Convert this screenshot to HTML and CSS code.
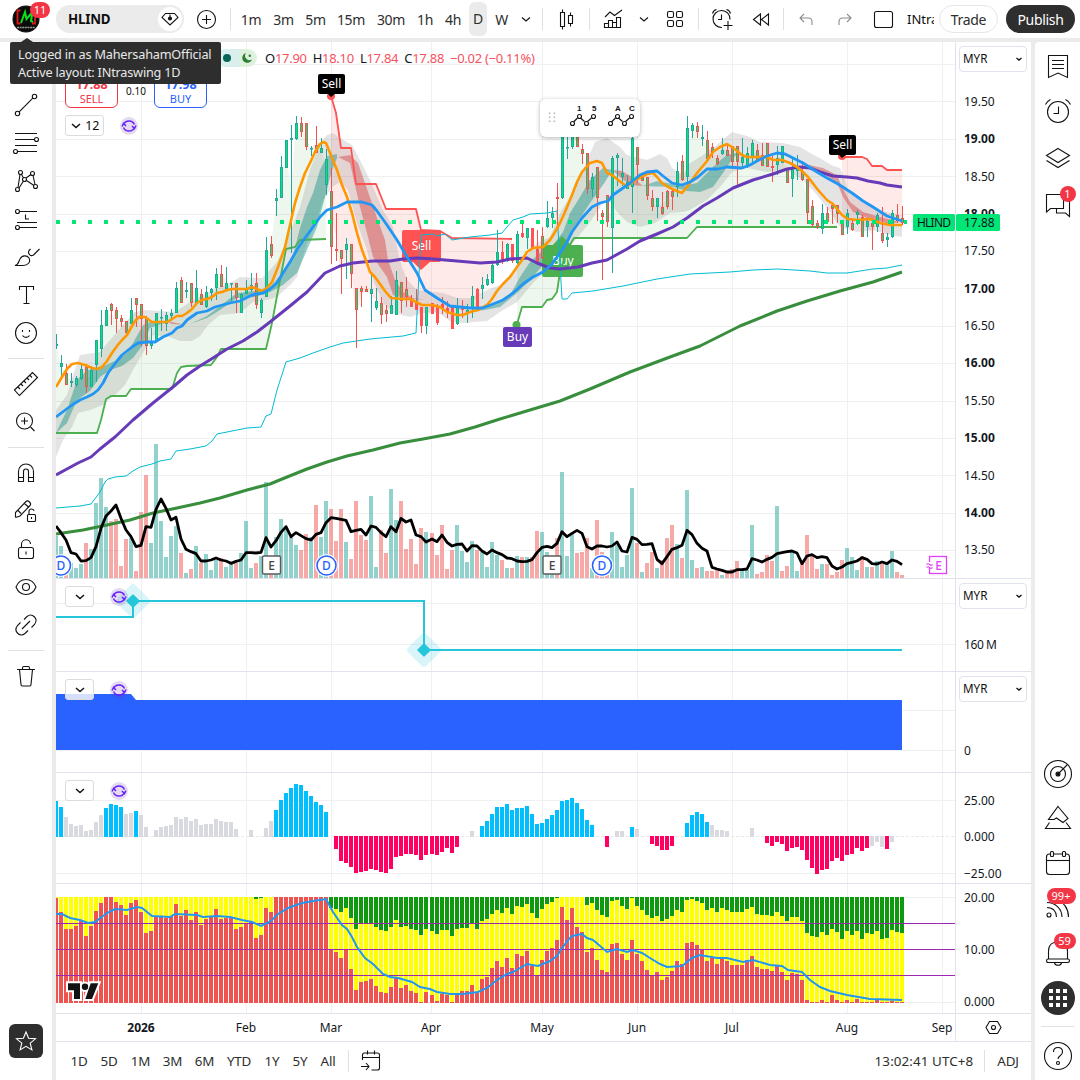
FILE: index.html
```html
<!DOCTYPE html>
<html lang="en">
<head>
    <meta charset="UTF-8">
    <meta name="viewport" content="width=device-width, initial-scale=1.0">
    <title>HLIND 17.88 - INtraswing 1D</title>
    <link rel="stylesheet" href="styles.css">
</head>
<body>
    <header class="topbar">
        <div class="avatar-cell">
            <svg class="avatar" viewBox="0 0 28 28"><circle cx="14" cy="14" r="13" fill="#0b0b0b"/><path d="M8.500 5.500H5.500v13h3M20 5.500h3v13h-3" fill="none" stroke="#e01717" stroke-width="1.800"/><path d="M9 18l4-11 1.500 7 6-7-1.500 9 2 1" fill="none" stroke="#0be01c" stroke-width="2"/><path d="M5 22.500h18" stroke="#999" stroke-width="1.500" stroke-dasharray="2 .6"/></svg>
            <span class="badge badge-avatar">11</span>
        </div>
        <div class="symbol">
            <b>HLIND</b>
            <span class="gem"><svg viewBox="0 0 24 24"><path d="M7.500 6.500h9l3.500 4-8 7.500-8-7.500z"/><path d="M12 7.500v4" /><circle cx="12" cy="11.500" r="1.500" fill="#131313"/></svg></span>
        </div>
        <div class="tb w44"><svg viewBox="0 0 28 28"><circle cx="14.500" cy="14.500" r="9"/><path d="M14.500 10v9M10 14.500h9"/></svg></div>
        <i class="sep sep-a"></i>
        <div class="tb w32 iv">1m</div>
        <div class="tb w33 iv">3m</div>
        <div class="tb w31 iv">5m</div>
        <div class="tb w40 iv">15m</div>
        <div class="tb w40 iv">30m</div>
        <div class="tb w28 iv">1h</div>
        <div class="tb w28 iv">4h</div>
        <div class="tb w22 iv"><span class="on">D</span></div>
        <div class="tb w25 iv">W</div>
        <div class="tb w24"><svg viewBox="0 0 28 28"><path d="M10 12.500l4 3.500 4-3.500"/></svg></div>
        <i class="sep sep-b"></i>
        <div class="tb w46"><svg viewBox="0 0 28 28"><path d="M8.500 7.500h4v14h-4zM10.500 7.500V4.500M10.500 21.500v3M16.500 10.500h4v8h-4zM18.500 10.500v-3M18.500 18.500v3"/></svg></div>
        <i class="sep"></i>
        <div class="tb w46"><svg viewBox="0 0 28 28"><path d="M5.500 22.500v-4h4v4zM9.500 22.500v-7h4v7M13.500 18.500v-1h4v5M17.500 17.500v-5h4v10h-16M6 12l5-5 4.500 3.500L23 5"/></svg></div>
        <div class="tb w16"><svg viewBox="0 0 28 28"><path d="M10 12.500l4 3.500 4-3.500"/></svg></div>
        <div class="tb w46"><svg viewBox="0 0 28 28"><rect x="6.500" y="6.500" width="6" height="6" rx="1.500"/><rect x="15.500" y="6.500" width="6" height="6" rx="1.500"/><rect x="6.500" y="15.500" width="6" height="6" rx="1.500"/><rect x="15.500" y="15.500" width="6" height="6" rx="1.500"/></svg></div>
        <i class="sep"></i>
        <div class="tb w46"><svg viewBox="0 0 28 28"><path d="M14 22.500a8.500 8.500 0 1 1 8-8M13.500 9.500v5h-3.500M4.500 8.500c.5-2 2-3.500 4-4M22.500 8.500c-.5-2-2-3.500-4-4M20 16v9M15.500 20.500h9"/></svg></div>
        <div class="tb w32"><svg viewBox="0 0 28 28"><path d="M13.500 9v11L6.500 14.500zM21.500 9v11l-7-5.500z"/></svg></div>
        <i class="sep sep-c"></i>
        <div class="tb w44 faded"><svg viewBox="0 0 28 28"><path d="M12 9l-4 4 4 4M8 13h8.500c2.500 0 3.500 1.500 3.500 4v3"/></svg></div>
        <div class="tb w34 faded"><svg viewBox="0 0 28 28"><path d="M16 9l4 4-4 4M20 13h-8.500c-2.500 0-3.500 1.500-3.500 4v3"/></svg></div>
        <div class="tb w42"><svg viewBox="0 0 28 28"><rect x="5.500" y="6.500" width="18" height="16" rx="2"/></svg></div>
        <div class="layout-name">INtraswing 1D</div>
        <button class="trade">Trade</button>
        <button class="publish">Publish</button>
    </header>

    <div class="workspace">
        <nav class="tools">
            <div class="tool"></div>
            <div class="tool"><svg viewBox="0 0 28 28"><circle cx="5.500" cy="22.500" r="2.200"/><circle cx="22.500" cy="5.500" r="2.200"/><path d="M7.200 20.800L20.800 7.200"/></svg></div>
            <div class="tool"><svg viewBox="0 0 28 28"><path d="M3 4.500h22M3 10.500h19M3 16.500h22M6 22.500h19"/><circle cx="24.500" cy="10.500" r="2"/><circle cx="3.500" cy="22.500" r="2"/></svg></div>
            <div class="tool"><svg viewBox="0 0 28 28"><circle cx="8.500" cy="5.500" r="2"/><circle cx="20.500" cy="6.500" r="2"/><circle cx="12.500" cy="12.500" r="2"/><circle cx="5.500" cy="22.500" r="2"/><circle cx="23.500" cy="19.500" r="2"/><path d="M8 7.500L6 20.500M9.500 7.500l2 3.500M14 11l5-3.500M21 8.500l2 9M7 21l4.500-7M14.500 13.500l7.500 5"/></svg></div>
            <div class="tool"><svg viewBox="0 0 28 28"><circle cx="5.500" cy="6.500" r="2"/><circle cx="5.500" cy="22.500" r="2"/><path d="M7.500 6.500H25M5 17.500h20M7.500 22.500H25M13.500 9.500v4.500h3.500"/></svg></div>
            <div class="tool"><svg viewBox="0 0 28 28"><path d="M3 22.500c4-1 3.500-4 5-6.500 2-4 7-4 9-1 2 4-1 7.500-6 7.500zM17 7.500c-1.500 3 1.500 6.500 4.500 4.500l6-6M17 7.500l1.500-1.500"/></svg></div>
            <div class="tool"><svg viewBox="0 0 28 28"><path d="M7.500 9V5.500h14V9M14.500 5.500v17M11.500 22.500h6"/></svg></div>
            <div class="tool"><svg viewBox="0 0 28 28"><circle cx="14" cy="14" r="10.500"/><path d="M10.500 16.500c1.500 2.500 5.500 2.500 7 0M10.500 11v2M17.500 11v2"/></svg></div>
            <hr>
            <div class="tool"><svg viewBox="0 0 28 28"><path d="M2.500 20L20.500 2.500l5 5L7.500 25.500zM6 17l2 2M9 14l2 2M12 11l2 2M15 8l2 2M18 5.500l2 2"/></svg></div>
            <div class="tool"><svg viewBox="0 0 28 28"><circle cx="12.500" cy="13" r="8"/><path d="M18.500 19l4 4M12.500 9.500v7M9 13h7"/></svg></div>
            <hr>
            <div class="tool"><svg viewBox="0 0 28 28"><path d="M6.500 22.500v-10a7.500 7.500 0 0 1 15 0v10h-5v-10a2.500 2.500 0 0 0-5 0v10zM6.500 18.500h5M16.500 18.500h5"/></svg></div>
            <div class="tool"><svg viewBox="0 0 28 28"><path d="M3.500 20.500v-5L14 4.500c1-1 2.500-.5 3.500.5s1.500 2.500.5 3.500L8 19l-4.500 1.500M12.500 6.500l4.500 4M6 13.500l3 3"/><rect x="15.500" y="17.500" width="8" height="7" rx="1"/><path d="M17 17.500V15a2.500 2.500 0 0 1 5-1M19.500 20v2"/></svg></div>
            <div class="tool"><svg viewBox="0 0 28 28"><rect x="6.500" y="12.500" width="15" height="11" rx="2"/><path d="M9.500 12.500V9.500a4.500 4.500 0 0 1 9-.5M14 16.500v3"/></svg></div>
            <div class="tool"><svg viewBox="0 0 28 28"><path d="M4 14c4-10 16-10 20 0-4 10-16 10-20 0z"/><circle cx="14" cy="14" r="3.500"/></svg></div>
            <div class="tool"><svg viewBox="0 0 28 28"><path d="M12 8.500l3-3c5-4 12 2 7.500 8l-3 3M16 19.500l-3 3c-5 4-12-2-7.500-8l3-3M10 18l8-8"/></svg></div>
            <hr>
            <div class="tool"><svg viewBox="0 0 28 28"><path d="M5 7.500h18M7.500 7.500l1.500 15c0 1 .5 1.500 1.500 1.500h7c1 0 1.500-.5 1.500-1.500l1.500-15M10.500 7.500V6c0-1 .5-1.500 1.500-1.500h4c1 0 1.500.5 1.500 1.500v1.500"/></svg></div>
            <div class="star"><svg viewBox="0 0 28 28"><path d="M14 5l2.600 6.300 6.900.5-5.300 4.400 1.700 6.700L14 19.300l-5.900 3.600 1.700-6.700-5.300-4.400 6.900-.5z"/></svg></div>
        </nav>

        <main class="chart">
            <section class="pane pane-main">
                <svg id="main" viewBox="56 42 975 536"></svg>
                <div class="legend">
                    <span class="session"><i></i><svg viewBox="0 0 12 12"><path d="M5 1a5 5 0 1 0 6 6.500A4.500 4.500 0 0 1 5 1z" fill="#2e7d32"/><circle cx="8.800" cy="3.800" r="1.200" fill="#2e7d32"/></svg></span>
                    <span>O<em>17.90</em></span><span>H<em>18.10</em></span><span>L<em>17.84</em></span><span>C<em>17.88</em></span><em>−0.02 (−0.11%)</em>
                </div>
                <div class="orders">
                    <div class="order sell"><b>17.88</b>SELL</div>
                    <span class="spread">0.10</span>
                    <div class="order buy"><b>17.98</b>BUY</div>
                </div>
                <div class="objects"><svg viewBox="0 0 12 12"><path d="M2 4l4 3.500L10 4"/></svg>12</div>
                <span class="sync sync-main"><svg viewBox="0 0 18 18"><path d="M3.500 7.500a6 6 0 0 1 11 0M14.500 10.500a6 6 0 0 1-11 0M2 9.500l1.500-3 2.500 2.500M16 8.500l-1.500 3L12 9"/></svg></span>
                <div class="currency">MYR<svg viewBox="0 0 10 10"><path d="M2.500 4L5 6l2.500-2"/></svg></div>
                <div class="drawbar">
                    <svg class="grip" viewBox="0 0 10 16"><path d="M1 1.500h2M7 1.500h2M1 6.500h2M7 6.500h2M1 11.500h2M7 11.500h2"/></svg>
                    <svg viewBox="0 0 28 28"><path d="M5.500 20l4-4M12.500 16l4 3.500M19.500 19.500l4-3.500"/><circle cx="4.500" cy="21.500" r="2"/><circle cx="11.500" cy="14.500" r="2"/><circle cx="18.500" cy="21.500" r="2"/><circle cx="25.500" cy="14.500" r="2"/><text x="9" y="9">1</text><text x="24" y="9">5</text></svg>
                    <svg viewBox="0 0 28 28"><path d="M5.500 20l4-4M12.500 16l4 3.500M19.500 19.500l4-3.500"/><circle cx="4.500" cy="21.500" r="2"/><circle cx="11.500" cy="14.500" r="2"/><circle cx="18.500" cy="21.500" r="2"/><circle cx="25.500" cy="14.500" r="2"/><text x="9" y="9">A</text><text x="23" y="9">C</text></svg>
                </div>
            </section>
            <section class="pane pane-shares">
                <svg id="shares" viewBox="56 579 975 92"></svg>
                <div class="objects collapsed"><svg viewBox="0 0 12 12"><path d="M2 4l4 3.500L10 4"/></svg></div>
                <span class="sync"><svg viewBox="0 0 18 18"><path d="M3.500 7.500a6 6 0 0 1 11 0M14.500 10.500a6 6 0 0 1-11 0M2 9.500l1.500-3 2.500 2.500M16 8.500l-1.500 3L12 9"/></svg></span>
                <div class="currency">MYR<svg viewBox="0 0 10 10"><path d="M2.500 4L5 6l2.500-2"/></svg></div>
            </section>
            <section class="pane pane-area">
                <svg id="area" viewBox="56 672 975 100"></svg>
                <div class="objects collapsed"><svg viewBox="0 0 12 12"><path d="M2 4l4 3.500L10 4"/></svg></div>
                <span class="sync"><svg viewBox="0 0 18 18"><path d="M3.500 7.500a6 6 0 0 1 11 0M14.500 10.500a6 6 0 0 1-11 0M2 9.500l1.500-3 2.500 2.500M16 8.500l-1.500 3L12 9"/></svg></span>
                <div class="currency">MYR<svg viewBox="0 0 10 10"><path d="M2.500 4L5 6l2.500-2"/></svg></div>
            </section>
            <section class="pane pane-hist">
                <svg id="hist" viewBox="56 773 975 110"></svg>
                <div class="objects collapsed"><svg viewBox="0 0 12 12"><path d="M2 4l4 3.500L10 4"/></svg></div>
                <span class="sync"><svg viewBox="0 0 18 18"><path d="M3.500 7.500a6 6 0 0 1 11 0M14.500 10.500a6 6 0 0 1-11 0M2 9.500l1.500-3 2.500 2.500M16 8.500l-1.500 3L12 9"/></svg></span>
            </section>
            <section class="pane pane-banker">
                <svg id="banker" viewBox="56 884 975 129"></svg>
            </section>
            <section class="pane pane-time">
                <svg id="time" viewBox="56 1014 975 27"></svg>
            </section>
            <footer class="ranges">
                <span class="r28">1D</span><span class="r32">5D</span><span class="r30">1M</span><span class="r34">3M</span><span class="r30">6M</span><span class="r39">YTD</span><span class="r28">1Y</span><span class="r28">5Y</span><span class="r28">All</span>
                <i></i>
                <svg viewBox="0 0 28 28"><path d="M5.500 13V8c0-1 .5-2 2-2h13c1.500 0 2 1 2 2v13c0 1.500-1 2-2 2h-6M5.500 10.500h17M10.500 3.500v4M17.500 3.500v4M4 19.500h8M9 16l3 3.500L9 23"/></svg>
                <span class="clock">13:02:41 UTC+8</span>
                <i></i>
                <span class="adj">ADJ</span>
            </footer>
        </main>

        <aside class="widgets">
            <div class="wg"><svg viewBox="0 0 28 28"><path d="M4.500 3.500h19v22L14 21l-9.500 4.500zM8 8.500h12M8 12.500h12M8 16.500h12"/></svg></div>
            <div class="wg"><svg viewBox="0 0 28 28"><circle cx="14" cy="15" r="10.500"/><path d="M14.500 9.500v7H9.500M1.500 7.500c1-2 3-4 5-5M26.500 7.500c-1-2-3-4-5-5"/></svg></div>
            <div class="wg"><svg viewBox="0 0 28 28"><path d="M14 5.500l11.500 7L14 19.500 2.500 12.500zM2.500 17.500l11.500 7 11.500-7"/></svg></div>
            <div class="wg"><svg viewBox="0 0 28 28"><path d="M2.500 5.500h17v14h-13l-4 3.500zM23 12.500h2.500v15l-4-3.500h-9v-4"/></svg><span class="badge b1">1</span></div>
            <div class="fill"></div>
            <div class="wg low"><svg viewBox="0 0 28 28"><circle cx="14" cy="14" r="13.500"/><circle cx="14" cy="14" r="7.500"/><circle cx="14" cy="14" r="2" fill="#131313"/><path d="M14 14l9.500-9.500"/></svg></div>
            <div class="wg low"><svg viewBox="0 0 28 28"><path d="M14 2.500l10 12-5 4-6.500-4.500-2.500 1.500h-5.500zM5.500 18.500l-4 6h25l-4.500-6"/></svg></div>
            <div class="wg low"><svg viewBox="0 0 28 28"><rect x="2.500" y="5" width="23" height="20.500" rx="3"/><path d="M2.500 11.500h23"/><rect x="6.500" y="2.500" width="3" height="5" rx="1" fill="#fff"/><rect x="18.500" y="2.500" width="3" height="5" rx="1" fill="#fff"/></svg></div>
            <div class="wg"><svg viewBox="0 0 28 28"><circle cx="5" cy="21" r="2"/><path d="M3 13.500c6 0 9.500 4 9.500 9.500M3 8.500c8 0 15 6 15 14.500M12 5c7 3 12.500 9 12.500 18"/></svg><span class="badge b2">99+</span></div>
            <div class="wg"><svg viewBox="0 0 28 28"><path d="M4.500 20v-8c0-6 4-9 9.500-9s9.500 3 9.500 9v8"/><rect x="2.500" y="20" width="23" height="3.500" rx="1.700"/><path d="M10.500 24c1 3 6 3 7 0"/></svg><span class="badge b3">59</span></div>
            <div class="wg apps"><svg viewBox="0 0 34 34"><circle cx="17" cy="17" r="17" fill="#2e2e2e" stroke="none"/><path d="M8 10h4M15 10h4M22 10h4M8 17h4M15 17h4M22 17h4M8 24h4M15 24h4M22 24h4" stroke="#fff" stroke-width="4"/></svg></div>
            <hr>
            <div class="wg help"><svg viewBox="0 0 28 28"><circle cx="14" cy="14" r="13.500"/><path d="M9.500 10c0-6 9-6 9 0 0 4-4.500 3.500-4.500 7"/><circle cx="14" cy="21" r="1.500"/></svg></div>
        </aside>
    </div>

    <div class="tooltip">Logged in as MahersahamOfficial<br>Active layout: INtraswing 1D</div>

    <script src="chart.js"></script>
</body>
</html>
```
FILE: styles.css
```css
* {
    box-sizing: border-box;
}

body {
    margin: 0;
    width: 1080px;
    height: 1080px;
    overflow: hidden;
    position: relative;
    display: flex;
    flex-direction: column;
    gap: 4px;
    background: #ebebeb;
    color: #0f0f0f;
    font-family: "Noto Sans", "Open Sans", sans-serif;
    font-size: 14px;
}

svg {
    display: block;
    fill: none;
    stroke: #131313;
    stroke-width: 1.1;
}

svg text {
    stroke: none;
    fill: #131722;
}

/* top bar */
.topbar {
    height: 38px;
    flex: none;
    display: flex;
    align-items: center;
    background: #fff;
}

.avatar-cell {
    position: relative;
    width: 56px;
    height: 38px;
    padding: 5px 0 0 12px;
}

.avatar {
    width: 28px;
    height: 28px;
}

.badge {
    position: absolute;
    height: 16px;
    border-radius: 8px;
    background: #f23645;
    color: #fff;
    font-size: 11px;
    line-height: 16px;
    text-align: center;
}

.badge-avatar {
    left: 30px;
    top: 2px;
    width: 20px;
}

.symbol {
    width: 128px;
    height: 28px;
    display: flex;
    align-items: center;
    justify-content: space-between;
    padding: 0 2px 0 12px;
    border-radius: 14px;
    background: #ebebeb;
    font-size: 13.3px;
    letter-spacing: -0.2px;
}

.gem {
    width: 24px;
    height: 24px;
    border-radius: 12px;
    background: #fff;
}

.tb {
    height: 38px;
    display: flex;
    flex: none;
    align-items: center;
    justify-content: center;
}

.tb svg {
    width: 28px;
    height: 28px;
    flex: none;
}

.iv {
    font-size: 14px;
    letter-spacing: -0.3px;
    color: #2e2e2e;
}

.faded svg {
    stroke: #8c8c8c;
}

.on {
    width: 18px;
    height: 34px;
    line-height: 34px;
    text-align: center;
    border-radius: 6px;
    background: #ebebeb;
}

.w16 { width: 16px; }
.w22 { width: 22px; }
.w24 { width: 24px; }
.w25 { width: 25px; }
.w28 { width: 28px; }
.w31 { width: 31px; }
.w32 { width: 32px; }
.w33 { width: 33px; }
.w34 { width: 34px; }
.w40 { width: 40px; }
.w42 { width: 42px; }
.w44 { width: 44px; }
.w46 { width: 46px; }

.sep {
    width: 1px;
    height: 22px;
    flex: none;
    background: #e0e0e0;
}

.sep-a { margin: 0 4px 0 2px; }
.sep-b { margin-left: 4px; }
.sep-c { margin-left: 6px; }

.layout-name {
    width: 27px;
    margin: 0 5px 0 3px;
    overflow: hidden;
    white-space: nowrap;
    font-size: 13px;
}

.trade, .publish {
    height: 28px;
    padding: 0;
    border-radius: 14px;
    font: 14px "Noto Sans", sans-serif;
    letter-spacing: -0.3px;
}

.trade {
    width: 59px;
    border: 1px solid #e6e6e6;
    background: #fff;
    color: #2e2e2e;
}

.publish {
    width: 69px;
    margin-left: 8px;
    border: none;
    background: #2e2e2e;
    color: #fff;
}

/* columns */
.workspace {
    flex: 1;
    display: flex;
    gap: 4px;
}

.tools {
    width: 52px;
    display: flex;
    flex-direction: column;
    align-items: center;
    padding-top: 6px;
    border-radius: 0 4px 0 0;
    background: #fff;
}

.tool {
    height: 38px;
    flex: none;
    display: flex;
    align-items: center;
}

.tool svg, .star svg {
    width: 28px;
    height: 28px;
}

.tools hr {
    width: 36px;
    height: 1px;
    margin: 6px 0;
    border: none;
    background: #e0e0e0;
}

.star {
    width: 34px;
    height: 34px;
    margin: auto 0 22px;
    padding: 3px;
    border-radius: 6px;
    background: #2e2e2e;
}

.star svg {
    stroke: #fff;
}

.widgets {
    width: 45px;
    display: flex;
    flex-direction: column;
    align-items: center;
    padding-top: 1px;
    border-radius: 4px 0 0 0;
    background: #fff;
}

.wg {
    position: relative;
    height: 45.6px;
    flex: none;
    display: flex;
    align-items: center;
}

.wg.low {
    height: 44.4px;
}

.wg svg {
    width: 28px;
    height: 28px;
    overflow: visible;
}

.wg.apps {
    height: 44px;
}

.wg.apps svg {
    width: 34px;
    height: 34px;
}

.fill {
    flex: 1;
}

.widgets hr {
    width: 33px;
    height: 1px;
    margin: 6px 0;
    border: none;
    background: #e0e0e0;
}

.wg.help {
    height: 46px;
    margin-bottom: 1px;
}

.b1 { left: 16px; top: 6px; width: 16px; }
.b2 { left: 3px; top: 3px; width: 29px; }
.b3 { left: 10px; top: 3px; width: 22px; }

/* chart panes */
.chart {
    width: 975px;
    display: flex;
    flex-direction: column;
    background: #fff;
}

.pane {
    position: relative;
    border-bottom: 1px solid #e0e3eb;
}

.pane-main { height: 537px; }
.pane-shares { height: 93px; }
.pane-area { height: 101px; }
.pane-hist { height: 111px; }
.pane-banker { height: 130px; }
.pane-time { height: 28px; }

.pane text {
    font-size: 12px;
}

.legend {
    position: absolute;
    left: 160px;
    top: 7px;
    height: 18px;
    display: flex;
    align-items: center;
    gap: 6px;
    font-size: 13px;
    letter-spacing: -0.28px;
    color: #131722;
}

.legend em {
    font-style: normal;
    color: #f7525f;
}

.session {
    width: 41px;
    height: 18px;
    display: flex;
    align-items: center;
    justify-content: flex-end;
    gap: 10px;
    padding-right: 4px;
    margin-right: 2px;
    border-radius: 9px;
    background: linear-gradient(90deg, #d9efed 55%, #def1df 55%);
}

.session i {
    width: 8px;
    height: 8px;
    border-radius: 4px;
    background: #056656;
}

.session svg {
    width: 12px;
    height: 12px;
    stroke: none;
}

.orders {
    position: absolute;
    left: 9px;
    top: 28px;
    display: flex;
    align-items: center;
}

.order {
    width: 53px;
    height: 38px;
    display: flex;
    flex-direction: column;
    align-items: center;
    justify-content: flex-end;
    padding-bottom: 1px;
    border: 1px solid;
    border-radius: 6px;
    font-size: 11px;
    line-height: 14px;
    background: #fff;
}

.order b {
    font-size: 12.5px;
}

.sell { color: #f23645; }
.buy { color: #2962ff; }

.spread {
    width: 36px;
    padding-top: 3px;
    text-align: center;
    font-size: 10px;
}

.objects {
    position: absolute;
    left: 9px;
    top: 73px;
    width: 39px;
    height: 21px;
    display: flex;
    align-items: center;
    justify-content: space-evenly;
    border: 1px solid #dcdcdc;
    border-radius: 3px;
    background: rgba(255, 255, 255, 0.8);
    font-size: 12.5px;
}

.objects svg {
    width: 12px;
    height: 12px;
    stroke-width: 1.5;
}

.collapsed {
    top: 7px;
    width: 29px;
}

.sync {
    position: absolute;
    left: 54px;
    top: 9px;
    width: 18px;
    height: 18px;
    border-radius: 9px;
    background: rgba(103, 58, 183, 0.18);
}

.sync svg {
    stroke: #651fff;
    stroke-width: 1.5;
}

.sync-main {
    left: 64px;
    top: 75px;
}

.currency {
    position: absolute;
    right: 4px;
    top: 4px;
    width: 68px;
    height: 26px;
    display: flex;
    align-items: center;
    justify-content: space-between;
    padding: 0 2px 2px 3px;
    border: 1px solid #e0e3eb;
    border-radius: 4px;
    font-size: 11.7px;
}

.currency svg {
    width: 10px;
    height: 10px;
    margin-top: 2px;
    stroke-width: 1.4;
}

.drawbar {
    position: absolute;
    left: 484px;
    top: 57px;
    width: 100px;
    height: 38px;
    display: flex;
    align-items: center;
    gap: 10px;
    padding-left: 8px;
    border-radius: 6px;
    background: #fff;
    box-shadow: 0 1px 4px rgba(0, 0, 0, 0.3);
}

.drawbar svg {
    width: 28px;
    height: 28px;
    flex: none;
    margin-top: -4px;
    overflow: visible;
}

.drawbar text {
    font: bold 8px "Liberation Sans", sans-serif;
}

.drawbar .grip {
    width: 8px;
    height: 13px;
    margin: 0 2px 0 0;
    stroke: #b8b8b8;
    stroke-width: 2;
}

.ranges {
    height: 38px;
    display: flex;
    align-items: center;
    padding-left: 9px;
    font-size: 13.4px;
    letter-spacing: -0.2px;
    color: #2e2e2e;
}

.ranges span {
    text-align: center;
}

.ranges svg {
    width: 28px;
    height: 28px;
    margin-left: 8px;
}

.ranges i {
    width: 1px;
    height: 22px;
    margin-left: 6px;
    background: #e0e0e0;
}

.r28 { width: 28px; }
.r30 { width: 31px; }
.r32 { width: 32px; }
.r34 { width: 33px; }
.r39 { width: 38px; }

.ranges .clock {
    margin-left: auto;
    width: 100px;
    white-space: nowrap;
    letter-spacing: 0.1px;
}

.ranges .adj {
    width: 46px;
}

.ranges .clock + i {
    margin-left: 10px;
}

.tooltip {
    position: absolute;
    left: 10px;
    top: 42px;
    width: 211px;
    height: 42px;
    padding: 3px 8px;
    border-radius: 2px;
    background: #2e2e2e;
    color: #e8e8e8;
    font-size: 12.7px;
    line-height: 18px;
    letter-spacing: -0.2px;
    white-space: nowrap;
}

.tooltip::before {
    content: "";
    position: absolute;
    left: 11px;
    top: -4px;
    border: 6px solid transparent;
    border-top: none;
    border-bottom: 4px solid #2e2e2e;
}
```
FILE: chart.js
```js
const NS = 'http://www.w3.org/2000/svg';
const X = k => Math.round(55.9 + 5.008 * k);
const nums = s => s.trim().split(/[\s,]+/).map(Number);

function add(parent, tag, attrs, text) {
    const el = document.createElementNS(NS, tag);
    for (const a in attrs) el.setAttribute(a, attrs[a]);
    if (text !== undefined) el.textContent = text;
    parent.appendChild(el);
    return el;
}
const rect = (p, x, y, w, h, fill, extra) => add(p, 'rect', { x, y, width: w, height: h, fill, stroke: 'none', ...extra });
const line = (p, points, stroke, w) => add(p, 'polyline', { points, stroke, 'stroke-width': w, 'stroke-linejoin': 'round', 'clip-path': 'url(#plot)' });
const poly = (p, points, fill) => add(p, 'polygon', { points, fill, stroke: 'none' });
const label = (p, x, y, t, extra) => add(p, 'text', { x, y, ...extra }, t);

const MONTHS = [[141, '2026'], [246, 'Feb'], [331, 'Mar'], [431, 'Apr'], [542, 'May'], [637, 'Jun'], [732, 'Jul'], [847, 'Aug'], [942, 'Sep']];

function grid(svg, y0, y1, rows) {
    const g = add(svg, 'g', { stroke: '#f0f0f0', 'stroke-width': 1 });
    MONTHS.forEach(m => add(g, 'path', { d: `M${m[0] + 0.5} ${y0}V${y1}` }));
    rows.forEach(y => add(g, 'path', { d: `M56 ${y}H955` }));
    add(svg, 'path', { d: `M955.5 ${y0}V${y1}`, stroke: '#e0e3eb', 'stroke-width': 1 });
}

/* ---- price pane ---- */
const main = document.getElementById('main');
const clip = add(main, 'clipPath', { id: 'plot' });
add(clip, 'rect', { x: 56, y: 42, width: 899, height: 980 });
const rows = [];
for (let i = 0; i < 14; i++) rows.push(Math.round(64 + 37.4 * i) + 0.5);
grid(main, 42, 578, rows);

// high, body top, body bottom, low (1/3 px from y=80), g = up, r = down
const candles = `762 793 797 806 g|825 849 861 893 g|851 880 914 914 r|880 903 908 922 g|888 893 914 922 g|849 867 896 901 g|851 861 922 938 r|858 870 922 922 g|780 780 854 906 g|690 735 806 832 g
680 690 737 737 g|669 672 694 735 r|680 690 716 758 r|706 714 725 740 r|724 724 760 768 r|655 690 733 733 g|655 655 674 740 r|672 672 717 798 r|708 714 797 824 r|743 788 797 806 g
698 700 787 787 g|687 710 714 753 g|696 706 733 752 g|687 700 708 724 g|606 625 700 700 g|592 601 670 670 r|606 629 635 653 g|610 610 670 680 r|570 625 670 670 g|627 643 674 674 r
618 637 682 685 g|625 627 640 662 g|565 583 625 660 g|555 583 620 622 r|562 608 628 628 g|610 610 612 663 g|610 610 653 698 r|640 643 698 698 g|600 628 643 643 g|578 615 629 635 g
579 608 674 686 r|655 661 698 713 g|471 510 652 652 g|468 493 528 533 r|327 355 362 408 g|228 262 355 355 g|181 181 265 265 g|135 175 180 518 g|108 129 178 180 g|111 129 155 170 r
129 129 200 209 r|199 203 207 228 g|138 195 220 220 r|175 203 220 220 g|208 238 316 345 g|264 334 502 551 r|399 508 512 542 r|511 511 538 641 r|474 493 510 597 g|493 493 583 625 r
625 625 691 803 r|618 625 637 680 r|619 626 637 637 r|577 627 641 725 g|625 664 683 689 g|652 670 706 733 r|676 691 701 725 r|648 674 701 701 g|573 601 704 704 g|606 607 664 698 r
591 628 652 680 r|645 658 680 680 r|627 664 691 691 r|682 682 738 760 r|682 682 738 761 g|670 670 701 701 r|672 682 728 734 r|652 672 686 701 r|664 685 698 713 r|677 680 746 746 r
655 680 733 735 g|660 680 690 713 r|673 691 700 728 g|618 648 686 713 g|625 628 682 683 r|591 615 627 658 g|583 597 615 618 g|547 556 610 611 g|450 517 556 558 g|483 517 542 553 r
489 493 544 545 g|493 493 544 548 r|454 463 548 560 g|432 460 470 475 r|445 445 475 508 g|445 445 505 508 r|450 508 553 554 r|441 469 535 538 r|363 415 442 443 g|381 400 415 445 g
309 352 357 440 r|130 168 355 356 g|160 200 204 236 g|130 165 200 208 g|130 160 200 200 r|192 207 221 252 r|219 219 326 342 r|280 291 326 350 g|262 262 355 422 r|391 400 410 600 r
346 346 425 440 r|228 235 443 578 g|219 226 235 318 g|235 280 292 318 g|286 306 326 328 g|165 175 320 398 g|202 202 254 308 r|280 290 302 304 r|290 290 347 359 r|329 353 380 392 r
353 355 380 415 g|337 380 401 404 r|331 334 382 386 r|324 334 350 389 r|247 274 320 350 g|225 243 301 304 r|108 145 290 314 g|129 135 152 174 g|126 138 155 175 r|135 172 177 197 g
153 181 238 242 r|190 202 219 235 r|226 235 253 254 r|174 210 221 226 g|196 211 227 228 r|199 199 247 262 r|199 199 247 315 r|175 232 250 262 g|201 220 262 264 g|179 190 232 247 g
193 211 241 247 r|190 226 257 257 r|189 189 262 262 r|228 257 265 305 r|199 235 256 286 g|199 199 250 250 g|265 265 308 308 r|235 265 298 350 g|226 262 272 300 g|243 274 301 302 r
297 297 400 433 r|361 379 436 442 r|419 430 441 446 r|373 400 446 461 g|382 400 425 426 r|372 374 388 431 r|374 374 402 428 r|420 430 464 464 r|386 400 440 461 g|419 430 449 452 r
390 397 404 434 g|404 410 472 472 r|415 424 442 470 g|420 430 442 510 r|400 405 440 455 g|380 460 482 489 r|460 472 480 500 g|391 400 472 475 g|372 405 424 428 r|378 415 430 434 r`
    .split(/[|\n]/).map(s => s.split(' '));
const cy = v => Math.round(80 + v / 3);

// trailing stop lines with the area up to the middle of each candle
const stops = [
    [0, 54, '#4caf50', 'rgba(76,175,80,.1)', '56,433 97,433 101,420 106,399 111,396 126,396 131,389 172,389 177,373 181,367 187,366 211,365 217,357 221,349 266,349 272,323 277,296 286,249 295,247 300,240 326,239'],
    [55, 91, '#ff5252', 'rgba(255,82,82,.12)', '331,96 336,113 341,148 351,148 356,184 376,184 386,209 416,209 421,230 440,231 452,238 512,239'],
    [92, 156, '#4caf50', 'rgba(76,175,80,.1)', '517,324 522,307 542,307 547,300 552,299 557,292 560,272 568,248 574,238 687,238 697,227 837,227'],
    [157, 169, '#ff5252', 'rgba(255,82,82,.12)', '842,157 862,157 867,159 872,166 882,166 887,170 902,170']
];
stops.forEach(([a, b, stroke, fill, pts]) => {
    let back = '';
    for (let k = b; k >= a; k--) back += ` ${X(k)},${(cy(+candles[k][0]) + cy(+candles[k][3])) / 2}`;
    poly(main, pts + back, fill);
});

// volume
const volume = `42 32 20r 15 10 14 35r 29 75 100 71 57r 59r 12r 39r 40 7r 66r 103r 35 134 57 21 42 52 25r 5 9r 32 15r 24 8 18 20r 11 16 15r 25 57 10 15r 22 96 12r 41 59 50 41 33 28r 44r 41 73r 41 77 69r 37r 69r 36 19r 77r
43r 38r 82 11 48r 25r 89 58 77r 29r 39r 14r 50r 46 45r 23r 53r 9r 28r 53 27 16 37 28r 26 11 36 23 18r 10 10r 22 21r 21 21r 47r 46 26 20 40r 106 22 44 25r 26r 40r 10 58r 26r 20r 46 33 11 23 90 35r 6 15r 26r 10 18r 40r 53r 34 20r 88 18 10r
11 7r 7r 8r 3 5r 9r 17r 8 8 53 4r 6r 23r 17r 72 7r 12r 25 7 16r 43r 22r 9r 14 14r 3r 6r 18r 30 21 8 22r 11 11r 17 14r 14 27 6r 3r`.split(/\s+/);
volume.forEach((v, k) => {
    const h = parseInt(v);
    rect(main, X(k) - 2, 578 - h, 4, h, v.endsWith('r') ? 'rgba(239,83,80,.5)' : 'rgba(38,166,154,.5)', { 'clip-path': 'url(#plot)' });
});

// cloud around the averages
poly(main, `56,410 67,395 72,378 80,355 100,352 110,340 123,325 135,312 145,310 175,312 190,302 207,293 230,283 240,277 262,278 270,270 277,262 287,240 300,207 310,170 320,143 327,135 333,133 340,138 352,145 360,160 370,180 383,210 393,227 397,247 402,267 407,280 417,290 443,293 457,298 470,298 487,290 500,285 513,272 523,260 537,243 550,237 560,213 570,197 583,170 595,142 607,138 620,147 627,155 647,160 660,154 667,158 672,168 683,175 690,163 700,157 713,148 725,138 732,132 747,136 760,142 783,143 800,147 810,153 823,160 833,166 840,168 845,180 848,192 863,203 877,210 890,213 902,215
902,237 890,235 873,230 857,232 840,227 830,212 817,195 803,180 787,170 767,172 747,168 732,172 720,187 707,200 690,210 683,212 670,213 655,223 640,227 627,222 617,212 607,197 590,222 570,247 560,262 543,273 533,283 517,302 503,310 487,321 463,323 450,321 437,312 423,313 410,317 393,313 383,303 373,280 367,250 357,223 348,190 340,182 332,187 323,200 317,220 307,243 297,277 290,285 277,297 267,300 253,302 240,313 220,315 208,325 200,336 192,341 180,341 170,337 153,335 143,353 133,370 125,385 117,393 103,405 90,410 78,413 72,427 63,440 56,457`, 'rgba(120,120,120,.2)');
const teal = 'rgba(0,137,123,.4)', rose = 'rgba(211,47,47,.4)';
[
    [teal, '56,433 67,410 77,380 87,370 100,368 117,360 127,353 133,343 143,325 150,322 167,322 150,328 142,346 133,358 122,366 110,370 100,377 90,391 77,400 67,423'],
    [rose, '166,321 187,325 172,324'],
    [teal, '190,324 207,316 220,306 237,293 257,291 270,287 285,270 293,255 300,228 307,207 313,193 320,170 327,156 337,154 337,158 332,170 325,197 317,227 307,250 297,273 283,285 270,292 255,297 237,298 220,310 207,318'],
    [rose, '338,157 350,155 358,163 365,183 377,218 385,240 388,260 395,280 403,292 413,298 425,300 403,298 393,295 387,277 373,257 367,233 360,207 350,163'],
    [teal, '480,311 497,303 510,295 520,277 530,262 543,250 553,245 563,232 570,213 580,197 590,180 603,168 612,170 605,182 590,203 577,223 567,240 555,252 543,265 530,280 517,293 500,307'],
    [rose, '612,170 622,171 632,177 643,186 630,185 620,177'],
    [teal, '643,186 657,181 673,184 683,186 697,183 707,173 717,163 727,155 740,152 733,158 723,173 713,187 700,192 687,191 673,187'],
    [rose, '800,163 823,168 837,175 842,187 850,202 863,212 880,217 900,222 890,224 867,218 853,212 843,197 837,183 823,173']
].forEach(r => poly(main, r[1], r[0]));

// signal boxes
rect(main, 402, 230, 39, 32, '#ff5252', { rx: 2 });
poly(main, '412,261 431,261 421,270', '#ff5252');
label(main, 421.5, 250, 'Sell', { 'text-anchor': 'middle', style: 'fill:#fff' });
rect(main, 542, 245, 41, 32, '#4caf50', { rx: 2 });
poly(main, '552,246 572,246 562,236', '#4caf50');
label(main, 563, 265, 'Buy', { 'text-anchor': 'middle', style: 'fill:#fff' });

stops.forEach(s => line(main, s[4], s[2], 1.8));
line(main, '56,508 80,506 91,504 100,492 105,482 108,479 115,477 126,476 133,471 140,467 152,464 160,461 171,459 176,451 190,449 206,446 212,441 217,434 247,428 261,427 266,416 271,414 277,390 286,362 300,358 313,353 330,347 343,343 370,339 403,336 416,333 421,235 433,234 437,236 445,234 452,240 470,237 490,235 502,233 507,227 513,220 523,217 530,214 547,213 557,211 562,299 567,299 572,293 593,291 623,286 657,279 690,274 730,272 753,270 778,269 810,271 827,273 847,273 873,269 887,268 902,265', '#00bcd4', 1);

candles.forEach((c, k) => {
    const [h, t, b, l] = c.slice(0, 4).map(v => cy(+v));
    const up = c[4] === 'g', x = X(k) + 0.5, col = up ? '#26a69a' : '#ef5350';
    const solid = !up && k > 70 && k < 97;
    const g = add(main, 'g', { 'clip-path': 'url(#plot)' });
    add(g, 'path', { d: `M${x} ${h}V${l}`, stroke: col, 'stroke-width': 1 });
    add(g, 'rect', { x: x - 1, y: t + 0.5, width: 2, height: Math.max(b - t - 1, 0.5), fill: solid ? '#ff5252' : '#00e676', stroke: solid ? '#ff5252' : col, 'stroke-width': 1 });
});

line(main, '56,534 83,530 107,525 130,520 153,513 177,508 200,503 220,498 247,490 270,484 287,477 307,469 327,462 347,456 373,450 400,443 423,439 450,434 475,427 500,419 530,410 560,401 590,389 630,372 670,357 700,346 740,326 777,311 807,301 840,291 873,282 902,272', '#388e3c', 3);
line(main, '56,475 78,463 91,457 100,449 115,437 133,420 153,403 173,387 187,375 200,366 213,358 227,349 243,341 257,332 270,322 290,306 307,292 325,273 340,266 353,263 373,261 390,261 403,259 417,258 433,259 457,261 480,263 497,262 510,259 527,258 537,263 550,268 560,269 578,267 592,263 607,260 627,249 640,241 657,234 673,227 687,218 703,206 717,198 733,188 753,180 773,174 787,169 800,167 810,168 820,172 833,176 847,177 857,178 868,181 880,183 887,185 902,187', '#673ab7', 3);
line(main, '56,387 62,377 67,369 72,364 78,363 85,365 92,368 97,369 102,367 107,361 112,353 117,346 122,340 127,335 132,326 135,321 139,317 145,317 152,322 167,322 177,316 182,316 187,313 192,309 197,303 202,300 207,299 212,297 217,293 222,292 227,290 232,289 247,289 252,287 262,291 267,288 272,282 278,267 285,247 290,225 295,203 300,187 305,173 310,163 315,152 320,144 323,142 326,143 332,158 337,170 342,185 347,197 352,213 357,233 362,250 367,263 370,272 375,277 385,291 391,298 403,299 410,299 422,305 432,305 440,307 447,312 457,315 463,315 470,312 478,310 487,305 492,299 497,291 503,284 510,277 517,267 522,260 527,252 533,248 543,247 550,240 555,232 560,223 565,212 572,195 577,182 582,172 590,163 597,161 602,163 607,173 612,175 617,179 622,183 627,186 637,179 647,174 653,173 657,177 662,183 668,187 677,191 682,193 687,187 692,180 697,173 702,167 707,161 713,152 720,147 727,144 732,147 737,151 742,155 747,157 767,157 773,160 782,160 790,163 797,167 803,172 808,177 818,190 827,200 833,204 838,210 842,215 848,219 857,220 870,219 880,223 890,225 902,225', '#ff9800', 2.6);
line(main, '56,417 72,405 80,400 87,397 93,394 98,390 103,383 108,373 117,361 122,355 127,351 132,347 138,343 147,342 155,342 163,337 172,333 177,328 182,326 187,320 197,313 207,311 215,307 230,303 240,301 252,295 263,293 270,289 277,283 283,273 290,262 298,248 305,238 313,227 320,217 327,210 337,207 347,202 362,202 372,205 377,211 387,225 397,240 407,257 417,273 425,290 437,298 450,306 470,308 483,308 493,304 503,300 513,293 523,284 533,277 543,272 552,264 557,257 562,250 567,242 572,232 577,225 582,218 592,207 600,203 608,201 613,195 623,188 630,183 640,175 647,172 657,171 663,176 672,183 682,185 690,182 698,177 707,169 718,169 727,167 742,168 750,165 757,161 767,156 777,153 785,154 793,158 803,163 817,172 827,178 838,184 852,193 863,201 873,207 887,216 893,218 902,221', '#2196f3', 2.8);

// volume average
const volMa = nums(`258 278 300 338 342 363 362 353 320 265 228 213 195 235 270 290 320 316 260 262 208 177 205 240 232 297 328 335 341 363 363 360 354 360 363 370 364 360 338 338 339 337 293 321 302 277 260 290 278 287 296 300 283 278 248 233 235 238 241 275 271
268 285 258 262 278 290 260 275 235 246 240 285 290 306 297 305 285 307 318 313 312 333 317 318 333 342 330 338 344 354 356 363 365 364 359 338 322 319 323 310 275 290 280 271 280 320 327 318 318 321 318 306 333 336 292 298 314 313 311 358 371 350 328 323 316 271 284 310
325 333 382 387 391 396 396 389 389 387 356 360 366 358 352 341 338 335 333 339 371 348 344 353 350 353 378 387 381 371 367 363 353 358 371 372 366 371 360 364 374`);
line(main, volMa.map((v, k) => `${X(k)},${440 + v / 3}`).join(' '), '#000', 2.8);

add(main, 'path', { d: 'M56 222H907', stroke: '#00e676', 'stroke-width': 4, 'stroke-dasharray': '4 12' });

function tag(x, y, w, text, color) {
    rect(main, x, y, w, 20, color, { rx: 2 });
    label(main, x + w / 2, y + 14, text, { 'text-anchor': 'middle', style: 'fill:#fff' });
}
[[331, 96, '#ff5252'], [842, 156, '#ff5252'], [516.5, 325, '#4caf50']].forEach(d => add(main, 'circle', { cx: d[0], cy: d[1], r: 4, fill: d[2], stroke: 'none' }));
poly(main, '327,93 336,93 331,97', '#000');
poly(main, '838,154 847,154 842,158', '#000');
tag(318, 74, 27, 'Sell', '#000');
tag(829, 135, 27, 'Sell', '#000');
tag(503, 327, 29, 'Buy', '#673ab7');

// events
const event = { 'text-anchor': 'middle' };
[61, 326.5, 602].forEach(x => {
    const g = add(main, 'g', { 'clip-path': 'url(#plot)' });
    add(g, 'circle', { cx: x, cy: 565.5, r: 9.8, fill: '#fff', stroke: '#fff', 'stroke-width': 3 });
    add(g, 'circle', { cx: x, cy: 565.5, r: 9.5, stroke: '#2962ff', 'stroke-width': 1.6 });
    label(g, x, 570, 'D', { ...event, style: 'fill:#2962ff;font-weight:500' });
});
[271.5, 552].forEach(x => {
    add(main, 'rect', { x: x - 9, y: 556, width: 18, height: 18, rx: 1.5, fill: '#fff', stroke: '#5c5c5c', 'stroke-width': 1.4 });
    label(main, x, 569.5, 'E', { ...event, style: 'fill:#444;font-weight:500' });
});
add(main, 'rect', { x: 929.5, y: 556.5, width: 17, height: 17, fill: '#fff', stroke: '#e040fb', 'stroke-width': 1.3 });
rect(main, 926, 562, 6, 6, '#fff');
add(main, 'path', { d: 'M926.5 564.500q1.500-1.500 3 0t3 0M926.500 567.500q1.500-1.500 3 0t3 0', stroke: '#e040fb' });
label(main, 938.5, 569.5, 'E', { ...event, style: 'fill:#e040fb;font-weight:500' });

// price scale
for (let i = 0; i < 13; i++) {
    const p = 19.5 - i * 0.5;
    label(main, 964, 106 + i * 37.35, p.toFixed(2), p % 1 ? {} : { 'font-weight': 'bold' });
}
rect(main, 913, 214, 42, 17, '#00e676', { rx: 1.5 });
rect(main, 956, 214, 44, 17, '#00e676', { rx: 1.5 });
label(main, 917, 227, 'HLIND', { textLength: 34 });
label(main, 964, 227, '17.88');

/* ---- shares outstanding ---- */
const shares = document.getElementById('shares');
grid(shares, 579, 671, [603.5, 644.5]);
[[133, 601], [424, 650]].forEach(([x, y]) => {
    add(shares, 'rect', { x: x - 13, y: y - 13, width: 26, height: 26, rx: 4, fill: 'rgba(38,198,218,.17)', stroke: 'none', transform: `rotate(45 ${x} ${y})` });
    add(shares, 'rect', { x: x - 5, y: y - 5, width: 10, height: 10, rx: 1, fill: '#26c6da', stroke: 'none', transform: `rotate(45 ${x} ${y})` });
});
add(shares, 'polyline', { points: '56,617 133,617 133,601 424,601 424,650 902,650', stroke: '#26c6da', 'stroke-width': 2 });
label(shares, 964, 649, '160 M', { textLength: 33 });

/* ---- area ---- */
const area = document.getElementById('area');
grid(area, 672, 772, [710.5, 750.5]);
poly(area, '56,694 131,694 136,700 902,700 902,750 56,750', '#2962ff');
label(area, 964, 755, '0');

/* ---- histogram ---- */
const hist = document.getElementById('hist');
grid(hist, 773, 883, [800.5, 873.5]);
add(hist, 'path', { d: 'M56 836.500H955', stroke: '#e8e8e8', 'stroke-width': 1, 'stroke-dasharray': '3 2' });
// g = neutral bar
const histo = `35 29 19g 12g 10g 11g 5g 6g 14g 21g 28 32 31 29 22g 23g 25 21g 9g 0 6g 9g 10g 11g 19g 17g 19g 15g 17g 11g 12g 12g 17g 15g 14g 14g 7g 0 0 6g 0 0 8g 15g 26 36 43 48 52 51 45 40 34 31 24 0
-12 -24 -26 -30 -36 -35 -34 -32 -33 -35 -36 -32 -20 -19 -17 -17 -18 -23 -18 -17 -18 -15 -11 -16 -10 0 0 5g 0 10 15 22 29 29 32 26 28 28 30 22 12 13 17 21 26 35 36 38 33 27 16 11 0 0 -10 0 5g 5g 0 9 7g 0 0 -7 -9 -13 -13 -9 0 0
13 21 24 22 14 11g 6g 6g 5g 0 0 0 0 8g 0 0 -6 -9 -5 -7 -14 -11 -10 -13 -23 -31 -37 -33 -32 -24 -21 -24 -18 -17 -11 -14 -11 -9g -5g -10g -12 -5g 0 0`.split(/\s+/);
histo.forEach((s, k) => {
    const v = parseInt(s);
    if (!v) return;
    const color = s.endsWith('g') ? '#d9dadf' : v > 0 ? '#00bfff' : '#ff0062';
    const x = Math.max(X(k) - 2, 56);
    rect(hist, x, v > 0 ? 836 - v : 836, X(k) + 2 - x, Math.abs(v) + 1, color);
});
label(hist, 964, 805, '25.00');
label(hist, 964, 841, '0.000');
label(hist, 964, 878, '−25.00');

/* ---- stacked columns ---- */
const banker = document.getElementById('banker');
grid(banker, 884, 1013, [897.5, 1002.5]);
const redTop = nums(`399 441 492 492 483 465 513 483 438 414 396 396 411 420 450 414 405 441 504 498 456 453 459 453 417 453 435 465 441 480 462 453 432 462 459 459 492 486 474 468 519 510 429 441 396 396 396 396 396 396 396 396 396 396 396
553 561 579 553 612 675 651 648 642 663 681 684 666 639 669 660 678 684 711 681 690 708 687 690 711 684 678 678 660 684 642 636 609 588 606 579 609 567 573 558 603 630 585 558 549 525 426 465 429 486 501 561 549 585 615 621 537 534 567 585 525 567 588 615 633 621 645 636 618 588 597
534 531 540 553 588 579 597 579 588 600 600 600 585 573 606 612 612 618 603 621 645 624 627 645 705 711 711 705 711 690 705 711 705 711 702 711 711 711 705 711 711 708 711 711`);
const greenEnd = nums(`429 432 441 429 459 492 474 474 474 486 495 498 486 465 486 483 492 495 510 492 498 507 495 495 513 492 489 489 474 492 468 462 447 435 444 429 447 423 426 417 444 459 432 417 411 399 396 396 396 396 396 420 414 435 450 456 408 405 423 432 399 423 435 450 459 453 468 462 453 435 441
405 402 408 414 435 429 441 429 435 441 441 441 432 426 447 450 450 453 441 453 468 456 456 468 504 513 516 501 510 492 501 522 498 510 498 522 504 507 498 522 519 495 501 504`);
redTop.forEach((r, k) => {
    const x = Math.max(X(k) - 2, 56), w = X(k) + 2 - x;
    const g = k < 55 ? (k === 40 ? 402 : k === 41 ? 399 : 396) : greenEnd[k - 55];
    const top = Math.round(765 + r / 3), gy = Math.round(765 + g / 3);
    rect(banker, x, 897, w, 106, '#ffff00');
    rect(banker, x, 897, w, gy - 897, '#0f990f');
    rect(banker, x, top, w, 1003 - top, '#ef5350');
});
[923.5, 949.5, 975.5].forEach(y => add(banker, 'path', { d: `M56 ${y}H955`, stroke: '#9c27b0', 'stroke-width': 1 }));
add(banker, 'polyline', { points: '56,914 62,914 70,918 80,920 88,923 95,922 107,913 115,909 127,910 137,907 142,908 152,916 170,917 175,914 197,915 203,917 217,916 230,917 242,920 252,922 261,926 267,923 272,920 278,914 288,908 302,903 313,901 326,899 333,912 342,925 347,929 352,937 357,947 365,958 373,964 383,974 390,977 398,978 412,982 420,987 430,989 437,992 450,994 463,994 478,992 487,988 497,980 507,974 513,972 527,964 538,966 550,961 557,956 562,948 570,938 572,936 582,934 587,938 593,940 607,952 617,949 627,952 633,950 642,953 650,958 660,964 667,967 682,966 692,958 700,955 717,958 727,958 743,962 753,960 770,965 782,966 788,970 802,972 810,980 820,987 830,991 847,995 870,999 902,1000', stroke: '#2196f3', 'stroke-width': 2 });
label(banker, 964, 902, '20.00');
label(banker, 964, 954, '10.00');
label(banker, 964, 1006, '0.000');
const logo = 'M68 983.300H80V999H74V990.300H68zM90.700 983.300H98.300L92 999H85.300zM88.200 986.700a3.200 3.200 0 1 1-6.400 0a3.200 3.200 0 1 1 6.400 0z';
add(banker, 'path', { d: logo, fill: '#fff', stroke: '#fff', 'stroke-width': 4 });
add(banker, 'path', { d: logo, fill: '#131313', stroke: 'none' });

/* ---- time axis ---- */
const time = document.getElementById('time');
add(time, 'path', { d: 'M955.5 1014V1041', stroke: '#e0e3eb', 'stroke-width': 1 });
MONTHS.forEach(([x, t]) => label(time, x, 1032, t, { 'text-anchor': 'middle', 'font-weight': t === '2026' ? 'bold' : 'normal' }));
add(time, 'path', { d: 'M989.500 1021.500h8l3.500 6-3.500 6h-8l-3.500-6z' });
add(time, 'circle', { cx: 993.5, cy: 1027.5, r: 2 });
```
